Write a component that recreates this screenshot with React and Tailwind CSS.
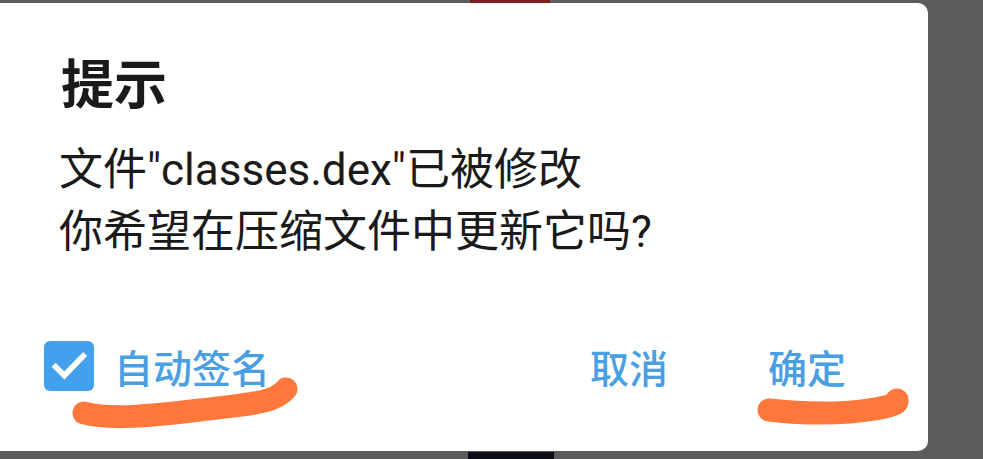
import React, { useState } from 'react';

const Scribble = ({ className, d, width, height }) => (
  <svg className={className} width={width} height={height} viewBox={`0 0 ${width} ${height}`}>
    <path d={d} fill="none" stroke="#ff773b" strokeWidth="23" strokeLinecap="round" strokeLinejoin="round" />
  </svg>
);

const App = () => {
  const [autoSign, setAutoSign] = useState(true);

  return (
    <div className="relative w-[983px] h-[459px] overflow-hidden bg-[#5c5c5c] font-['Noto_Sans_CJK_SC','Noto_Sans',sans-serif]">
      {/* dialog */}
      <div className="relative mt-[3px] w-[928px] h-[448px] bg-white rounded-r-[10px] flex flex-col">
        <div className="pl-[61px] pt-[42px] text-[53px] leading-[72px] font-bold text-[#1a1a1a]">提示</div>

        <div className="pl-[59px] pt-[22px] text-[44px] leading-[62px] text-[#1a1a1a] font-['Roboto','Noto_Sans_CJK_SC',sans-serif]">
          <div>文件"classes.dex"已被修改</div>
          <div>你希望在压缩文件中更新它吗?</div>
        </div>

        <div className="mt-auto mb-[60px] flex items-center pl-[44px] pr-[82px]">
          <button
            onClick={() => setAutoSign(!autoSign)}
            className="flex items-center gap-[20px]"
          >
            <span className="w-[50px] h-[50px] rounded-[6px] bg-[#43a0ec] flex items-center justify-center">
              {autoSign && (
                <svg width="40" height="40" viewBox="0 0 24 24">
                  <path d="M4 12.5l5.2 5.2L20.5 6" fill="none" stroke="white" strokeWidth="3.4" strokeLinecap="square" />
                </svg>
              )}
            </span>
            <span className="text-[39px] leading-[50px] font-medium text-[#4a9fe3]">自动签名</span>
          </button>
          <div className="ml-auto flex items-center gap-[100px]">
            <button className="text-[39px] leading-[50px] font-medium text-[#4a9fe3]">取消</button>
            <button className="text-[39px] leading-[50px] font-medium text-[#4a9fe3]">确定</button>
          </div>
        </div>
      </div>

      {/* hand drawn marks over the screenshot */}
      <Scribble
        className="absolute left-[70px] top-[370px]"
        width={240}
        height={60}
        d="M14 43 C40 50, 80 46, 130 40 S 205 33, 216 19"
      />
      <Scribble
        className="absolute left-[755px] top-[385px]"
        width={165}
        height={40}
        d="M14 25 C50 29, 90 29, 120 24 S 140 15, 142 15"
      />

      {/* bits of the page behind */}
      <div className="absolute left-[468px] top-[452px] w-[86px] h-[7px] bg-[#0b0d18]" />
      <div className="absolute left-[470px] top-0 w-[80px] h-[3px] bg-[#7a1f22]" />
    </div>
  );
};

export default App;
